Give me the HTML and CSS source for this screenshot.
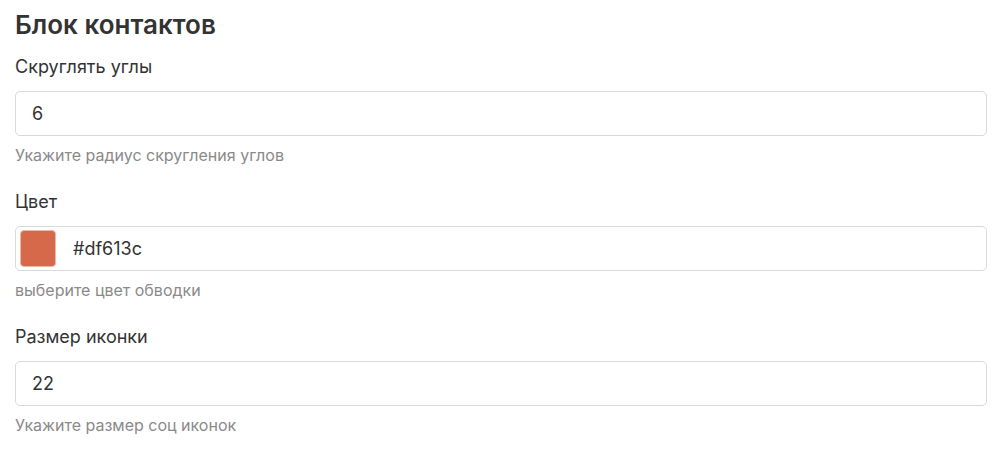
FILE: index.html
```html
<!DOCTYPE html>
<html lang="ru">
<head>
    <meta charset="UTF-8">
    <title>Блок контактов</title>
    <link rel="stylesheet" href="styles.css">
</head>
<body>
    <div class="panel">
        <h2 class="title">Блок контактов</h2>

        <div class="field">
            <label for="radius">Скруглять углы</label>
            <input id="radius" class="input" type="text" value="6">
            <p class="help">Укажите радиус скругления углов</p>
        </div>

        <div class="field">
            <label for="color">Цвет</label>
            <div class="input color-input">
                <span class="swatch"></span>
                <span class="color-value">#df613c</span>
            </div>
            <p class="help">выберите цвет обводки</p>
        </div>

        <div class="field">
            <label for="iconSize">Размер иконки</label>
            <input id="iconSize" class="input" type="text" value="22">
            <p class="help">Укажите размер соц иконок</p>
        </div>
    </div>
</body>
</html>
```
FILE: styles.css
```css
* {
    box-sizing: border-box;
    margin: 0;
    padding: 0;
}

body {
    font-family: Inter, 'Liberation Sans', sans-serif;
    background: #fff;
    color: #333;
}

.panel {
    padding: 9px 13px 0 15px;
}

.title {
    font-size: 26px;
    font-weight: 600;
    line-height: 32px;
    margin-bottom: 14px;
    color: #333;
}

.field {
    margin-bottom: 25px;
}

.field label {
    display: block;
    font-size: 18px;
    line-height: 24px;
    margin-bottom: 12px;
}

.input {
    display: block;
    width: 100%;
    height: 45px;
    padding: 0 16px;
    border: 1px solid #d9d9d9;
    border-radius: 5px;
    font-family: inherit;
    font-size: 18px;
    color: #333;
    background: #fff;
}

.input:focus {
    outline: none;
}

.color-input {
    display: flex;
    align-items: center;
    padding: 0 4px;
}

.swatch {
    width: 36px;
    height: 37px;
    border-radius: 4px;
    background: #d6694a;
    border: 1px solid #eab9a9;
}

.color-value {
    margin-left: 17px;
}

.help {
    font-size: 16px;
    line-height: 20px;
    margin-top: 9px;
    color: #8a8a8a;
}
```
